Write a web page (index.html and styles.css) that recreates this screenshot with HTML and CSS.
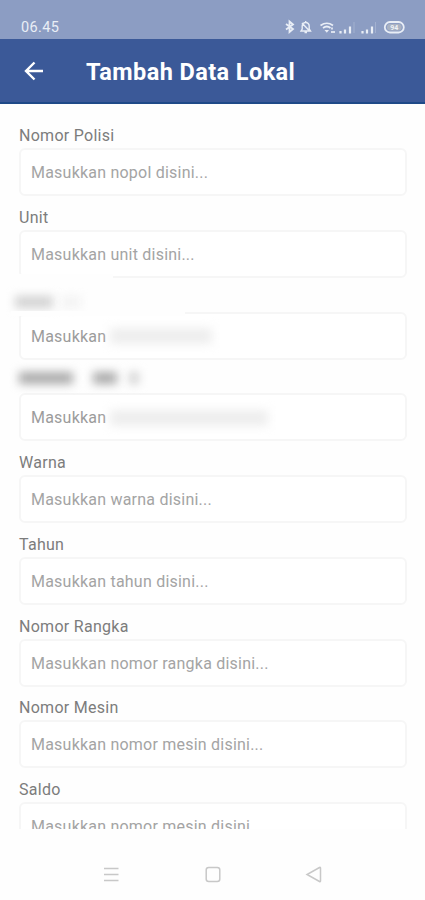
FILE: index.html
```html
<!DOCTYPE html>
<html lang="id">
  <head>
    <meta charset="UTF-8">
    <meta name="viewport" content="width=device-width, initial-scale=1.0">
    <title>Tambah Data Lokal</title>
    <link rel="stylesheet" href="styles.css">
  </head>
  <body>
    <div class="status-bar">
      <span class="clock">06.45</span>
      <svg class="status-icons" width="124" height="16" viewBox="0 0 124 16" fill="none" stroke="#e9eef6">
        <!-- bluetooth -->
        <path d="M3 5l7 5-3.500 3V2.500l3.500 3-7 5" stroke-width="1.800"/>
        <!-- muted bell -->
        <path d="M18 12h9.500l-1.300-2V7a3.500 3.500 0 0 0-7 0v3zM21.500 13.500h2.500M22.700 2v2M19 4l7.500 8" stroke-width="1.400"/>
        <!-- wifi -->
        <path d="M37.500 6.500q6.500-4.500 12.500 0M40 9q4-3 7.500 0" stroke-width="1.700"/>
        <path d="M41.500 11h4.500l-2.200 2.700z" fill="#e9eef6" stroke="none"/>
        <path d="M49 8.500v2M49 12v2M51 12v2" stroke-width="1.700"/>
        <!-- signal bars -->
        <path d="M57.500 12V14.500M62 10.500V14.500M67 7.500V14.500" stroke-width="2.200"/>
        <path d="M71 3v11" stroke-width="1" opacity=".25"/>
        <path d="M79.500 12V14.500M84 10.500V14.500M89 7.500V14.500" stroke-width="2.200"/>
        <path d="M92.500 3v11" stroke-width="1" opacity=".25"/>
        <!-- battery -->
        <rect x="101.800" y="3" width="19" height="10.500" rx="5.200" stroke-width="1.800"/>
        <rect x="104" y="5" width="14.600" height="6.500" rx="3" fill="#a9b2c2" stroke="none"/>
        <text class="battery-text" x="111.300" y="10.900" text-anchor="middle">94</text>
      </svg>
    </div>

    <header class="app-bar">
      <svg class="back" width="20" height="20" viewBox="0 0 20 20" fill="none" stroke="#fff" stroke-width="2.400">
        <path d="M19 10H2.500M10.500 1.500L2 10l8.500 8.500"/>
      </svg>
      <h1>Tambah Data Lokal</h1>
    </header>

    <form class="form">
      <div class="field">
        <label for="nopol">Nomor Polisi</label>
        <input type="text" id="nopol" placeholder="Masukkan nopol disini...">
      </div>
      <div class="field">
        <label for="unit">Unit</label>
        <input type="text" id="unit" placeholder="Masukkan unit disini...">
      </div>
      <div class="field">
        <div class="hidden-label first">
          <span class="smudge w38"></span>
          <span class="smudge faint w20"></span>
        </div>
        <div class="input">Masukkan<span class="smudge pale w105"></span></div>
      </div>
      <div class="field">
        <div class="hidden-label second">
          <span class="smudge dark w54"></span>
          <span class="smudge dark w24"></span>
          <span class="smudge w10"></span>
        </div>
        <div class="input">Masukkan<span class="smudge pale w160"></span></div>
      </div>
      <div class="field">
        <label for="warna">Warna</label>
        <input type="text" id="warna" placeholder="Masukkan warna disini...">
      </div>
      <div class="field">
        <label for="tahun">Tahun</label>
        <input type="text" id="tahun" placeholder="Masukkan tahun disini...">
      </div>
      <div class="field">
        <label for="rangka">Nomor Rangka</label>
        <input type="text" id="rangka" placeholder="Masukkan nomor rangka disini...">
      </div>
      <div class="field">
        <label for="mesin">Nomor Mesin</label>
        <input type="text" id="mesin" placeholder="Masukkan nomor mesin disini...">
      </div>
      <div class="field">
        <label for="saldo">Saldo</label>
        <input type="text" id="saldo" placeholder="Masukkan nomor mesin disini...">
      </div>
    </form>

    <nav class="nav-bar">
      <svg width="18" height="18" viewBox="0 0 18 18">
        <path d="M2 2.500h14.500M2 8.500h14.500M2 14.500h14.500"/>
      </svg>
      <svg width="18" height="18" viewBox="0 0 18 18">
        <rect x="2.200" y="1.500" width="13.600" height="14" rx="2.500"/>
      </svg>
      <svg width="18" height="18" viewBox="0 0 18 18">
        <path d="M15.500 2v13q0 1-1 .5L2 8.500l12.500-7q1-.500 1 .5z"/>
      </svg>
    </nav>
  </body>
</html>
```
FILE: styles.css
```css
* {
  box-sizing: border-box;
}
body {
  margin: 0;
  height: 900px;
  display: flex;
  flex-direction: column;
  overflow: hidden;
  font-family: Roboto, sans-serif;
  background-color: #fefefe;
}
.status-bar {
  flex: none;
  height: 39px;
  padding: 15px 18px 0 21px;
  display: flex;
  justify-content: space-between;
  align-items: center;
  background-color: #8c9dc3;
}
.clock {
  font-size: 14.500px;
  letter-spacing: 0.400px;
  color: #e9eef6;
}
.battery-text {
  font-size: 7px;
  font-weight: 700;
  fill: #eef1f6;
  stroke: none;
}
.app-bar {
  flex: none;
  height: 65px;
  padding: 0 24px;
  display: flex;
  align-items: center;
  gap: 42px;
  background-color: #3b5998;
  border-bottom: 2px solid #1f4a88;
}
.app-bar h1 {
  margin: 0;
  padding-top: 3px;
  font-size: 23.500px;
  font-weight: 700;
  letter-spacing: 0.420px;
  color: #fff;
}
.form {
  flex: none;
  height: 725px;
  padding: 18px 18px 0 19px;
  overflow: hidden;
}
.field {
  height: 81.750px;
}
label,
.hidden-label {
  display: flex;
  align-items: center;
  height: 26px;
  padding-top: 1px;
  font-size: 16px;
  letter-spacing: 0.280px;
  color: #7c7c7c;
}
input,
.input {
  display: flex;
  align-items: center;
  width: 100%;
  height: 48px;
  padding: 1px 10px 0;
  border: 2px solid #f6f6f6;
  border-radius: 6px;
  background-color: #fff;
  font-family: inherit;
  font-size: 16px;
  letter-spacing: 0.220px;
  color: #9c9c9c;
}
input::placeholder {
  color: #a4a4a4;
  opacity: 1;
}
/* censored values */
.smudge {
  position: relative;
  height: 12px;
  background-color: #d2d2d2;
  filter: blur(5px);
}
.smudge.dark {
  background-color: #aaa;
}
.smudge.pale {
  height: 16px;
  margin-left: 4px;
  background-color: #eee;
}
.smudge.faint {
  background-color: #f3f3f3;
}
.first {
  position: relative;
  gap: 8px;
  margin-left: -4px;
  padding-top: 6px;
}
/* the smear also wipes the borders around the label */
.first::before,
.first::after {
  content: "";
  position: absolute;
  left: -4px;
  background-color: #fefefe;
}
.first::before {
  top: -12px;
  width: 102px;
  height: 8px;
}
.first::after {
  top: 25px;
  width: 174px;
  height: 5px;
}
.second {
  gap: 20px;
  padding-bottom: 6px;
}
.second .w10 {
  margin-left: -8px;
}
.w10 {
  width: 10px;
}
.w20 {
  width: 20px;
}
.w24 {
  width: 24px;
}
.w38 {
  width: 38px;
}
.w54 {
  width: 54px;
}
.w105 {
  width: 102px;
}
.w160 {
  width: 158px;
}
.nav-bar {
  flex: 1;
  padding: 20px 102px 0;
  display: flex;
  justify-content: space-between;
  align-items: center;
}
.nav-bar svg {
  fill: none;
  stroke: #c8c8c8;
  stroke-width: 1.500;
}
```
